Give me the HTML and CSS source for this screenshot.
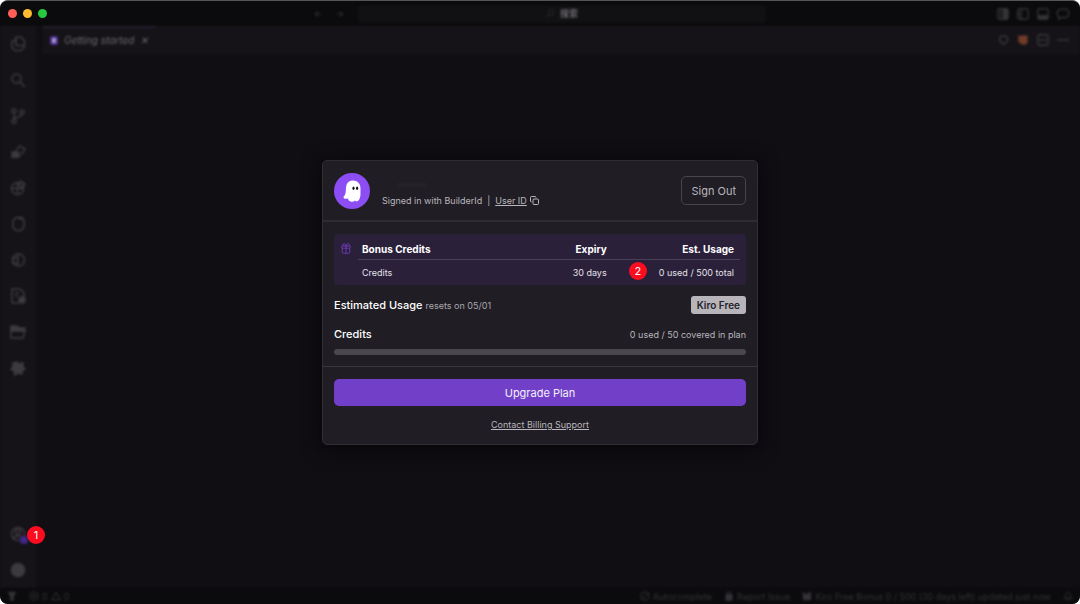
FILE: index.html
```html
<!DOCTYPE html>
<html lang="en">
<head>
    <meta charset="UTF-8">
    <meta name="viewport" content="width=device-width, initial-scale=1.0">
    <title>Kiro - Account</title>
    <link rel="stylesheet" href="styles.css">
</head>
<body>
    <div class="window">
        <header class="titlebar">
            <div class="lights">
                <span class="light red"></span>
                <span class="light yellow"></span>
                <span class="light green"></span>
            </div>
            <div class="history dimmed">
                <button aria-label="Back"><svg width="8" height="8" viewBox="0 0 8 8"><path d="M7 4H1M4 1L1 4l3 3"/></svg></button>
                <button aria-label="Forward"><svg width="8" height="8" viewBox="0 0 8 8"><path d="M1 4h6M4 1l3 3-3 3"/></svg></button>
            </div>
            <button class="command dimmed">
                <svg width="9" height="9" viewBox="0 0 16 16"><circle cx="9" cy="6.5" r="5"/><path d="M5.5 10L1 15"/></svg>
                搜索
            </button>
            <div class="layout-actions dimmed">
                <button aria-label="Toggle chat"><svg viewBox="0 0 16 16"><rect x="2" y="2" width="12" height="12" rx="2"/><path class="solid" d="M8 3h5v10H8z"/><path d="M5 3v10"/></svg></button>
                <button aria-label="Toggle side bar"><svg viewBox="0 0 16 16"><rect x="2" y="2" width="12" height="12" rx="2"/><path d="M6 2v12M3.5 5v6"/></svg></button>
                <button aria-label="Toggle panel"><svg viewBox="0 0 16 16"><rect x="2" y="2" width="12" height="12" rx="2"/><path class="solid" d="M3 10h10v3H3z"/></svg></button>
                <button aria-label="Open chat"><svg viewBox="0 0 16 16"><path d="M5 2.500h7l2.500 3V9L12 12H6l-3 2v-3L1.500 9V5z"/></svg></button>
            </div>
        </header>

        <div class="workbench dimmed">
            <nav class="activity">
                <button aria-label="Explorer"><svg viewBox="0 0 16 16"><path d="M6 1h5l3.500 3.500V11L11 14.500H5L2 12V5h3zM6 1v8.500h8"/></svg></button>
                <button aria-label="Search"><svg viewBox="0 0 16 16"><circle cx="6.5" cy="6.5" r="4.5"/><path d="M10 10l5 5"/></svg></button>
                <button aria-label="Source control"><svg viewBox="0 0 16 16"><circle cx="4" cy="3" r="2"/><circle cx="4" cy="13.5" r="2"/><circle cx="12" cy="4" r="2"/><path d="M4 5v6.500M12 6c0 3-4 3-8 4"/></svg></button>
                <button aria-label="Run and debug"><svg viewBox="0 0 16 16"><path d="M6 6l4-4 5 3-4 6"/><circle class="solid" cx="5.500" cy="10.500" r="3"/><path d="M1 8l9 5.500M1 14l9-6M1 11h9"/></svg></button>
                <button aria-label="Extensions"><svg viewBox="0 0 16 16"><circle cx="7.500" cy="8.500" r="6"/><path d="M1.500 8.500h12M7.500 2.500v12"/><path d="M11 1l4 3-3 4-4-3z"/></svg></button>
                <button aria-label="Kiro"><svg viewBox="0 0 16 16"><path d="M8 1.500h4l2 3v6l-3 4H6l-3-3V5l2-3zM7 1.500l6 2"/></svg></button>
                <button aria-label="Remote"><svg viewBox="0 0 16 16"><circle cx="8.500" cy="8" r="6"/><path d="M3 6h5v5H3zM8 3v10"/></svg></button>
                <button aria-label="Specs"><svg viewBox="0 0 16 16"><path d="M9 15H2V1h8l4 4v4M5 5h4M5 8h3"/><circle class="solid" cx="12" cy="12" r="3"/></svg></button>
                <button aria-label="Projects"><svg viewBox="0 0 16 16"><path class="solid" d="M1 2h6l2 2h6v3H1z"/><path d="M1 3v11h12l2-8"/></svg></button>
                <button aria-label="Tools"><svg viewBox="0 0 16 16"><path class="solid" d="M3 3l4-1 2 2 4-1v4l2 2-3 2v3l-4-1-3 2-1-4-3-2 2-2z"/></svg></button>
                <button class="account" aria-label="Account">
                    <svg viewBox="0 0 16 16"><circle cx="8" cy="8" r="6.5"/><circle cx="8" cy="6" r="2.5"/><path d="M3 13c2-4 8-4 10 0"/></svg>
                    <span class="account-dot"></span>
                </button>
                <button aria-label="Settings"><svg viewBox="0 0 16 16"><circle class="solid" cx="8" cy="8" r="6.5"/></svg></button>
            </nav>
            <main class="editor">
                <div class="tabs">
                    <div class="tab">
                        <span class="tab-icon"></span>
                        <span>Getting started</span>
                        <button aria-label="Close tab">✕</button>
                    </div>
                    <div class="editor-actions">
                        <button aria-label="Run"><svg viewBox="0 0 16 16"><path d="M5 4l6-1 3 5-5 5-5-4z"/></svg></button>
                        <button class="orange" aria-label="Debug"><svg viewBox="0 0 16 16"><path class="solid" d="M3 4l3 0 3-1 2 1 2 0-1 3 1 3-3 3-4-1-3-3 1-2z"/></svg></button>
                        <button aria-label="Split editor"><svg viewBox="0 0 16 16"><rect x="2" y="2" width="12" height="12" rx="3"/><path d="M3 8h10"/></svg></button>
                        <button aria-label="More"><svg viewBox="0 0 16 16"><path d="M1 8h14"/></svg></button>
                    </div>
                </div>
            </main>
        </div>

        <footer class="status dimmed">
            <span class="status-item"><svg viewBox="0 0 16 16"><path class="solid" d="M2 2h12l-4 7v6H6V9z"/></svg></span>
            <span class="status-item problems">
                <svg viewBox="0 0 16 16"><circle cx="8" cy="8" r="6.5"/><path d="M5 5l6 6M11 5l-6 6"/></svg>0
                <svg viewBox="0 0 16 16"><path d="M8 2l7 12H1z"/></svg>0
            </span>
            <span class="spacer"></span>
            <span class="status-item"><svg viewBox="0 0 16 16"><circle cx="8" cy="8" r="6.5"/><path d="M3 13L13 3"/></svg>Autocomplete</span>
            <span class="status-item"><svg viewBox="0 0 16 16"><path class="solid" d="M3 6h10v9H3z"/><path d="M5 6V2h6v4"/></svg>Report Issue</span>
            <span class="status-item"><svg viewBox="0 0 16 16"><path class="solid" d="M2 2l4 4 8-4v12H2z"/></svg>Kiro Free Bonus 0 / 500 (30 days left) updated just now</span>
            <span class="status-item"><svg viewBox="0 0 16 16"><path d="M2 12h12l-2-3V6L8 2 4 6v3zM7 14h2"/></svg></span>
        </footer>

        <span class="marker marker-account">1</span>

        <div class="overlay">
            <section class="card" role="dialog" aria-label="Account usage">
                <div class="card-header">
                    <svg class="avatar" width="36" height="36" viewBox="0 0 36 36">
                        <circle cx="18" cy="18" r="18" fill="#8c4df5"/>
                        <path fill="#fff" d="M12 14.500C12.500 10 15 7.500 19 7.500c4.500 0 7.500 3 7.500 8v5c0 3-.5 5-1.800 6.800-1.200 1.500-2.900 1.500-3.700.2-1.200 1.300-2.800 1.600-4.400 1-1.700-.6-2.600-1.700-2.400-3-1.500.7-3.700.3-4.500-.6-.6-1.100.3-1.600 1-2.600 1.300-2.200 1-4.800 1.300-7.800z"/>
                        <ellipse cx="19.500" cy="15.300" rx="1.100" ry="1.700" fill="#17131d"/>
                        <ellipse cx="23.100" cy="15.300" rx="1.100" ry="1.700" fill="#17131d"/>
                    </svg>
                    <div class="identity">
                        <span class="hidden-email"></span>
                        <p>
                            Signed in with BuilderId <span class="divider">|</span>
                            <a href="#">User ID</a>
                            <button class="copy" aria-label="Copy user ID">
                                <svg width="9" height="9" viewBox="0 0 9 9"><rect x="3" y="3" width="5.5" height="5.5" rx="1"/><path d="M1.500 6C.9 6 .5 5.600.5 5V1.500c0-.6.4-1 1-1H5c.6 0 1 .4 1 1"/></svg>
                            </button>
                        </p>
                    </div>
                    <button class="sign-out">Sign Out</button>
                </div>

                <div class="usage">
                    <div class="bonus">
                        <svg class="gift" width="10" height="11" viewBox="0 0 10 11"><rect x=".5" y="3" width="9" height="2.2" rx=".6"/><path d="M1.300 5.200v4c0 .7.400 1.100 1.100 1.100h5.200c.7 0 1.100-.4 1.100-1.100v-4M5 3v7.300M5 3C4.300.8 3.300.5 2.700.6 1.300.8 1.300 3 2.700 3M5 3c.7-2.200 1.700-2.500 2.300-2.400C8.700.8 8.700 3 7.300 3"/></svg>
                        <table>
                            <thead>
                                <tr><th>Bonus Credits</th><th>Expiry</th><th>Est. Usage</th></tr>
                            </thead>
                            <tbody>
                                <tr>
                                    <td>Credits</td>
                                    <td>30 days</td>
                                    <td><span class="used">0 used / 500 total<span class="marker marker-bonus">2</span></span></td>
                                </tr>
                            </tbody>
                        </table>
                    </div>
                    <div class="row">
                        <h2>Estimated Usage <small>resets on 05/01</small></h2>
                        <span class="plan">Kiro Free</span>
                    </div>
                    <div class="row credits">
                        <label for="credits">Credits</label>
                        <span class="covered">0 used / 50 covered in plan</span>
                    </div>
                    <progress id="credits" value="0" max="50"></progress>
                </div>

                <div class="card-footer">
                    <button class="upgrade">Upgrade Plan</button>
                    <a href="#">Contact Billing Support</a>
                </div>
            </section>
        </div>
    </div>
</body>
</html>
```
FILE: styles.css
```css
* {
    margin: 0;
    padding: 0;
    box-sizing: border-box;
}

body {
    background: #fff;
    font-family: Inter, "Noto Sans CJK SC", sans-serif;
    font-size: 9px;
    color: #b9b6bd;
}

button {
    font: inherit;
    color: inherit;
    background: none;
    border: none;
    cursor: pointer;
}

svg {
    display: block;
    flex: none;
    fill: none;
    stroke: currentColor;
}

.window {
    position: relative;
    display: flex;
    flex-direction: column;
    min-height: 100vh;
    border-top: 1px solid #555456;
    border-radius: 8px;
    overflow: hidden;
    background: #100e13;
}

/* everything behind the account card is out of focus */
.dimmed {
    filter: blur(1px);
}

/* title bar */
.titlebar {
    display: grid;
    grid-template-columns: 1fr 408px 1fr;
    align-items: center;
    height: 25px;
    padding: 0 8px;
    background: #0b0b0d;
    color: #333235;
}

.lights {
    display: flex;
    gap: 6px;
    grid-area: 1 / 1;
}

.light {
    width: 9px;
    height: 9px;
    border-radius: 50%;
}

.red {
    background: #ff5f57;
}

.yellow {
    background: #febc2e;
}

.green {
    background: #28c840;
}

.history {
    grid-area: 1 / 1;
    justify-self: end;
    display: flex;
    gap: 14px;
    padding-right: 14px;
}

.titlebar {
    grid-template-columns: calc(50% - 182px) 408px 1fr;
}

.command {
    grid-area: 1 / 2;
    display: flex;
    align-items: center;
    justify-content: center;
    gap: 5px;
    height: 18px;
    border-radius: 4px;
    background: #111013;
    color: #68666b;
    font-weight: 700;
}

.command svg {
    color: #3a393c;
}

.layout-actions,
.editor-actions {
    display: flex;
    gap: 6px;
    justify-self: end;
    padding-right: 2px;
}

.layout-actions svg,
.editor-actions svg {
    width: 14px;
    height: 14px;
    stroke-width: 1.5;
}

.solid {
    fill: currentColor;
}

/* workbench */
.workbench {
    flex: 1;
    display: flex;
}

.activity {
    display: flex;
    flex-direction: column;
    width: 36px;
    background: #161318;
    color: #3c393f;
}

.activity button {
    position: relative;
    display: flex;
    align-items: center;
    justify-content: center;
    height: 36px;
}

.activity svg {
    width: 16px;
    height: 16px;
    stroke-width: 1.5;
}

.activity .account {
    margin-top: auto;
}

.account-dot {
    position: absolute;
    right: 8px;
    bottom: 8px;
    width: 8px;
    height: 8px;
    border-radius: 50%;
    background: #41278a;
}

.editor {
    flex: 1;
    padding-left: 7px;
    background: #100e13;
}

.tabs {
    display: flex;
    align-items: center;
    justify-content: space-between;
    height: 28px;
    padding-right: 8px;
    background: #161318;
    color: #39373c;
}

.tab {
    display: flex;
    align-items: center;
    gap: 6px;
    height: 28px;
    padding: 0 8px 2px 7px;
    border-top: 2px solid #241d2c;
    color: #6b686f;
    font-size: 10px;
    font-style: italic;
}

.tab-icon {
    width: 8px;
    height: 9px;
    border: 2px solid #4a2e91;
    border-radius: 2px;
    background: #a394c6;
}

.orange {
    color: #713b29;
}

/* status bar */
.status {
    display: flex;
    align-items: center;
    gap: 12px;
    height: 16px;
    padding: 0 7px;
    background: #0b0a0c;
    color: #343237;
}

.status-item {
    display: flex;
    align-items: center;
    gap: 3px;
}

.status svg {
    width: 10px;
    height: 10px;
    stroke-width: 1.5;
}

.spacer {
    flex: 1;
}

/* numbered markers */
.marker {
    position: absolute;
    width: 18px;
    height: 18px;
    border-radius: 50%;
    background: #fb0d1f;
    color: #fff;
    font-size: 11px;
    line-height: 18px;
    text-align: center;
}

.marker-account {
    left: 27px;
    bottom: 60px;
}

.marker-bonus {
    right: 100%;
    top: 50%;
    margin: -10px 12px 0 0;
}

/* account card */
.overlay {
    position: absolute;
    inset: 0;
    display: flex;
    align-items: center;
    justify-content: center;
}

.card {
    width: 100%;
    max-width: 436px;
    border: 1px solid #302e34;
    border-radius: 5px;
    background: #201d24;
    box-shadow: 0 4px 20px #060508;
}

.card-header {
    display: flex;
    align-items: center;
    gap: 12px;
    height: 61px;
    padding: 0 11px;
    border-bottom: 2px solid #2f2d33;
}

.avatar {
    stroke: none;
}

.identity {
    flex: 1;
}

.hidden-email {
    display: block;
    width: 30px;
    height: 4px;
    margin: 8px 0 8px 15px;
    background: #26242a;
    filter: blur(1px);
}

.identity p {
    display: flex;
    align-items: center;
    line-height: 12px;
}

.divider {
    margin: 0 5px;
}

.identity a,
.card-footer a {
    color: inherit;
    text-underline-offset: 1px;
}

.copy {
    margin-left: 3px;
}

.sign-out {
    height: 29px;
    padding: 0 9px;
    border: 1px solid #47454b;
    border-radius: 5px;
    font-size: 11px;
}

.usage {
    padding: 12px 11px 11px;
}

.bonus {
    display: flex;
    padding: 5px 6px 0 7px;
    border-radius: 4px;
    background: #2b203a;
}

.gift {
    margin: 4px 7px 0 0;
    color: #7340c4;
    stroke-width: 0.8;
}

table {
    flex: 1;
    border-collapse: collapse;
    table-layout: fixed;
    color: #e4e1e8;
}

th,
td {
    width: 33%;
    padding: 0 6px 0 4px;
    text-align: right;
}

th {
    height: 20px;
    border-bottom: 1px solid #493f57;
    font-size: 10px;
    font-weight: 700;
    color: #fff;
}

td {
    height: 26px;
}

th:first-child,
td:first-child {
    text-align: left;
}

.used {
    position: relative;
}

.row {
    display: flex;
    align-items: center;
    justify-content: space-between;
    margin-top: 11px;
}

h2,
.row label {
    font-size: 11px;
    font-weight: 500;
    color: #fff;
}

h2 small {
    font-size: 9px;
    font-weight: 400;
    color: #aaa7ae;
}

.plan {
    padding: 0 6px;
    border-radius: 3px;
    background: #b7b5ba;
    color: #242128;
    font-size: 10px;
    font-weight: 600;
    line-height: 18px;
}

.credits {
    height: 18px;
}

progress {
    display: block;
    appearance: none;
    width: 100%;
    height: 6px;
    margin-top: 6px;
    border: none;
    border-radius: 3px;
    background: #4a474d;
    overflow: hidden;
}

progress::-webkit-progress-bar {
    background: #4a474d;
}

progress::-webkit-progress-value {
    background: #7240c8;
}

.card-footer {
    display: flex;
    flex-direction: column;
    align-items: center;
    gap: 12px;
    padding: 12px 11px;
    border-top: 1px solid #39363d;
}

.card-footer a {
    line-height: 14px;
}

.upgrade {
    width: 100%;
    height: 27px;
    border-radius: 5px;
    background: #7240c8;
    color: #f4effb;
    font-size: 11px;
}
```
